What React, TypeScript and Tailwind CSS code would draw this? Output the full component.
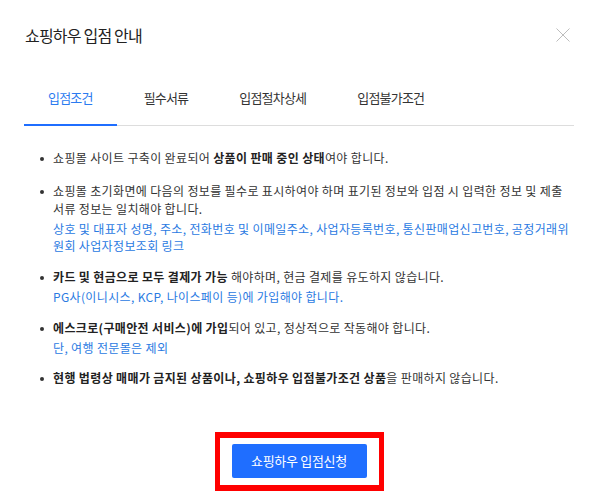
import React from "react";

const font = { fontFamily: '"Noto Sans CJK KR", "Noto Sans", sans-serif' };

function Bullet({ children, className = "" }: { children: React.ReactNode; className?: string }) {
  return (
    <li className={`flex ${className}`}>
      <span className="w-[4px] h-[4px] rounded-full bg-[#333] mt-[8px] shrink-0" />
      <div className="ml-[9px] flex-1">{children}</div>
    </li>
  );
}

export default function App() {
  const tabs = ["입점조건", "필수서류", "입점절차상세", "입점불가조건"];
  return (
    <div className="w-[598px] h-[494px] bg-white overflow-hidden" style={font}>
      <div className="h-[70px] px-6 pt-[25px] flex justify-between items-start">
        <h1 className="text-[16px] leading-[20px] text-[#222] font-normal tracking-[-0.8px] ml-px">쇼핑하우 입점 안내</h1>
        <button className="mt-[3px] mr-[4px]" aria-label="닫기">
          <svg width="14" height="14" viewBox="0 0 14 14" fill="none">
            <path d="M0.5 0.5L13.5 13.5M13.5 0.5L0.5 13.5" stroke="#bdbdbd" strokeWidth="1" />
          </svg>
        </button>
      </div>
      <ul className="mx-6 flex border-b border-[#dddddd] gap-[3px]">
        {tabs.map((t, i) => (
          <li
            key={t}
            className={`px-6 pt-[19px] pb-[18px] leading-[17px] text-[13px] -mb-px border-b-2 tracking-[-0.8px] ${
              i === 0 ? "border-[#1f6eff] text-[#2b7bf0]" : "border-transparent text-[#333]"
            }`}
          >
            {t}
          </li>
        ))}
      </ul>
      <ul className="mt-[23px] pl-[40px] pr-[24px] text-[12px] leading-[18px] text-[#333] tracking-[0.35px]">
        <Bullet>
          쇼핑몰 사이트 구축이 완료되어 <b className="font-bold text-[#222]">상품이 판매 중인 상태</b>여야 합니다.
        </Bullet>
        <Bullet className="mt-[15px]">
          <p>
            쇼핑몰 초기화면에 다음의 정보를 필수로 표시하여야 하며 표기된 정보와 입점 시 입력한 정보 및 제출 서류 정보는 일치해야 합니다.
          </p>
          <p className="mt-[2px] leading-[17px] text-[#2a7ae2]">
            상호 및 대표자 성명, 주소, 전화번호 및 이메일주소, 사업자등록번호, 통신판매업신고번호, 공정거래위원회 사업자정보조회 링크
          </p>
        </Bullet>
        <Bullet className="mt-[14px]">
          <p>
            <b className="font-bold text-[#222]">카드 및 현금으로 모두 결제가 가능</b> 해야하며, 현금 결제를 유도하지 않습니다.
          </p>
          <p className="mt-[2px] leading-[17px] text-[#2a7ae2]">PG사(이니시스, KCP, 나이스페이 등)에 가입해야 합니다.</p>
        </Bullet>
        <Bullet className="mt-[14px]">
          <p>
            <b className="font-bold text-[#222]">에스크로(구매안전 서비스)에 가입</b>되어 있고, 정상적으로 작동해야 합니다.
          </p>
          <p className="mt-[2px] leading-[17px] text-[#2a7ae2]">단, 여행 전문몰은 제외</p>
        </Bullet>
        <Bullet className="mt-[13px]">
          <b className="font-bold text-[#222]">현행 법령상 매매가 금지된 상품이나, 쇼핑하우 입점불가조건 상품</b>을 판매하지 않습니다.
        </Bullet>
      </ul>
      <div className="flex justify-center mt-[45px]">
        <div className="border-x-[5px] border-y-[6px] border-[#ff0000] px-[12px] pt-[6px] pb-[7px]">
          <button className="w-[135px] h-[34px] bg-[#1f6eff] rounded-[2px] text-white text-[13px] tracking-[-0.3px]">
            쇼핑하우 입점신청
          </button>
        </div>
      </div>
    </div>
  );
}
